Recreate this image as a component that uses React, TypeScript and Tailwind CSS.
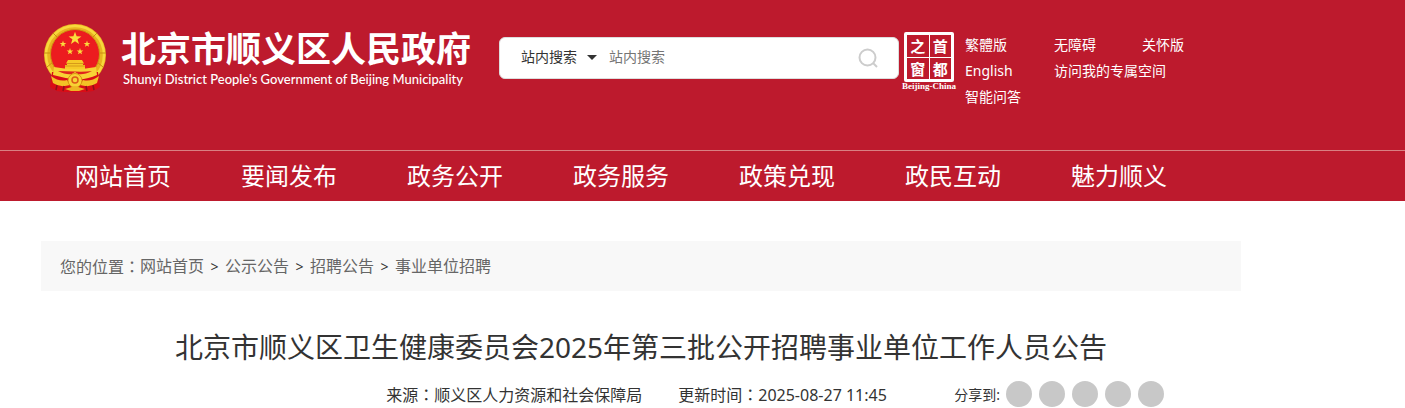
import React from "react";

const navItems = ["网站首页", "要闻发布", "政务公开", "政务服务", "政策兑现", "政民互动", "魅力顺义"];

const crumbs = ["网站首页", "公示公告", "招聘公告", "事业单位招聘"];

const shareTargets = ["微信", "微博", "QQ", "QQ空间", "更多"];

const Star = ({ x, y, r }: { x: number; y: number; r: number }) => (
  <path
    transform={`translate(${x} ${y}) scale(${r})`}
    d="M0-1L.24-.32.95-.31.38.12.59.81 0 .4-.59.81-.38.12-.95-.31-.24-.32Z"
    fill="#fbdc3c"
  />
);

const Emblem = () => (
  <svg className="h-[70px] w-16 shrink-0" viewBox="0 0 64 70" aria-hidden="true">
    <circle cx="32" cy="32" r="31" fill="#e9b320" />
    <circle cx="32" cy="32" r="29" fill="none" stroke="#f7d93c" strokeWidth="2.5" />
    <path d="M4 44L10 39M60 44L54 39M10 10L14 14M54 10L50 14M1 30L7 30M63 30L57 30" stroke="#c98e12" />
    <circle cx="32" cy="31" r="24.5" fill="#ec1c1f" stroke="#cf9412" />
    <Star x={32} y={15.5} r={6.8} />
    <Star x={20} y={21} r={3.5} />
    <Star x={44} y={21} r={3.5} />
    <Star x={27} y={28.5} r={3.5} />
    <Star x={37} y={28.5} r={3.5} />
    <path d="M25 37h14l2 3.5h-1v1.5h2v4H22v-4h2v-1.5h-1z" fill="#f6c927" />
    <path d="M24 40.5h16M22 43h20" stroke="#d79a18" />
    <path d="M9 49L7 64L14 68L21 69H43L50 68L57 64L55 49Z" fill="#d90d16" />
    <path d="M11 44Q21 46 32 46T53 44L54 52Q44 57 32 56T10 52Z" fill="#f8d235" />
    <path d="M15 48Q23 52 29 51L32 49L35 51Q41 52 49 48Q41 49 32 48.5T15 48Z" fill="#e0251d" />
    <path d="M8 53Q16 59 24 57L27 62Q17 65 10 60ZM56 53Q48 59 40 57L37 62Q47 65 54 60Z" fill="#f3c225" />
    <path d="M14 62L13 67M21 63L20 68M43 63L44 68M50 62L51 67" stroke="#8f1118" strokeWidth="1.5" />
    <circle cx="32" cy="57.5" r="7" fill="#f8d235" stroke="#d7970f" />
    <circle cx="32" cy="57" r="3" fill="none" stroke="#dd5a18" strokeWidth="1.5" />
    <path d="M22 66L32 63L42 66L36 68H28Z" fill="#eeb523" />
  </svg>
);

const CapitalWindow = () => (
  <a href="#" className="flex w-14 shrink-0 flex-col items-center text-white" aria-label="首都之窗">
    <span className="grid size-[50px] grid-cols-2 grid-rows-2 gap-px rounded-xs border-[3px] border-white bg-white font-['Noto_Sans_CJK_SC',sans-serif] text-[15px] leading-none font-bold">
      {["之", "首", "窗", "都"].map((c) => (
        <span key={c} className="flex items-center justify-center bg-[#bd1a2d]">
          {c}
        </span>
      ))}
    </span>
    <span className="font-['Liberation_Serif',serif] text-[9px] leading-[8px] font-bold whitespace-nowrap">
      Beijing-China
    </span>
  </a>
);

// full-width colon, centred in its box
const Colon = () => <span className="font-['Noto_Sans_CJK_TC',sans-serif]">：</span>;

const App = () => {
  return (
    <div className="min-h-screen bg-white font-['Noto_Sans','Noto_Sans_CJK_SC',sans-serif] text-[#333]">
      <header className="bg-[#bd1a2d] text-white">
        <div className="ml-[41px] flex h-[150px] max-w-[1200px] items-start">
          <a href="#" className="mt-[23px] flex w-[458px] shrink-0 gap-3.5 pl-0.5">
            <Emblem />
            <span className="block whitespace-nowrap">
              <span className="mt-1 block text-[35px] leading-[44px] font-bold">北京市顺义区人民政府</span>
              <span className="block pl-0.5 font-['Lato',sans-serif] text-[13px] leading-4 font-medium">
                Shunyi District People's Government of Beijing Municipality
              </span>
            </span>
          </a>

          <form className="mt-[37px] flex h-[42px] w-[400px] shrink-0 items-center rounded-md border border-[#ddd] bg-white pr-5 pl-[21px] text-[14px]">
            <div className="relative shrink-0">
              <select
                aria-label="搜索范围"
                className="block w-[88px] appearance-none bg-transparent pb-1 text-[#333] outline-none"
              >
                <option>站内搜索</option>
              </select>
              <svg className="pointer-events-none absolute top-[9px] right-3 h-[5px] w-[10px]" viewBox="0 0 10 5">
                <path d="M0 0h10L5 5z" fill="#333" />
              </svg>
            </div>
            <input
              aria-label="站内搜索"
              placeholder="站内搜索"
              className="min-w-0 flex-1 pb-1 text-[#333] outline-none placeholder:text-[#757575]"
            />
            <button type="button" aria-label="搜索">
              <svg className="size-5" viewBox="0 0 20 20" fill="none" stroke="#ccc" strokeWidth="2">
                <circle cx="9.5" cy="9.5" r="8" />
                <path d="M15 15l4 4" />
              </svg>
            </button>
          </form>

          <div className="mt-8 ml-0.5 flex gap-2">
            <CapitalWindow />
            <div className="grid grid-cols-[89px_88px_88px] text-[14px] leading-[26px] whitespace-nowrap">
              <a href="#">繁體版</a>
              <a href="#">无障碍</a>
              <a href="#">关怀版</a>
              <a href="#">English</a>
              <a href="#" className="col-span-2">访问我的专属空间</a>
              <a href="#">智能问答</a>
            </div>
          </div>
        </div>

        <nav className="border-t border-[#d98082]">
          <ul className="ml-10 grid max-w-[1162px] grid-cols-7 text-center text-[24px] leading-[50px]">
            {navItems.map((item) => (
              <li key={item}>
                <a href="#">{item}</a>
              </li>
            ))}
          </ul>
        </nav>
      </header>

      <main className="mt-10 ml-[41px] max-w-[1200px]">
        <div className="flex h-[50px] items-center bg-[#f8f8f8] px-[19px] text-[16px] text-[#666]">
          <span>您的位置<Colon /></span>
          {crumbs.map((crumb, i) => (
            <React.Fragment key={crumb}>
              {i > 0 && <span className="w-[21px] text-center text-[14px] text-[#333]">&gt;</span>}
              <a href="#">{crumb}</a>
            </React.Fragment>
          ))}
        </div>

        <h1 className="mt-8 text-center text-[28px] leading-[48px]">
          北京市顺义区卫生健康委员会2025年第三批公开招聘事业单位工作人员公告
        </h1>

        <div className="mt-2.5 flex items-center justify-end pr-[77px] whitespace-nowrap">
          <span className="mr-9">来源<Colon />顺义区人力资源和社会保障局</span>
          <span className="w-[276px]">更新时间<Colon />2025-08-27 11:45</span>
          <span className="mr-1.5 text-[14px]">分享到:</span>
          <div className="flex gap-[7px]">
            {shareTargets.map((name) => (
              <button key={name} type="button" aria-label={name} className="size-[26px] rounded-full bg-[#c8c8c8]" />
            ))}
          </div>
        </div>
      </main>
    </div>
  );
};

export default App;
